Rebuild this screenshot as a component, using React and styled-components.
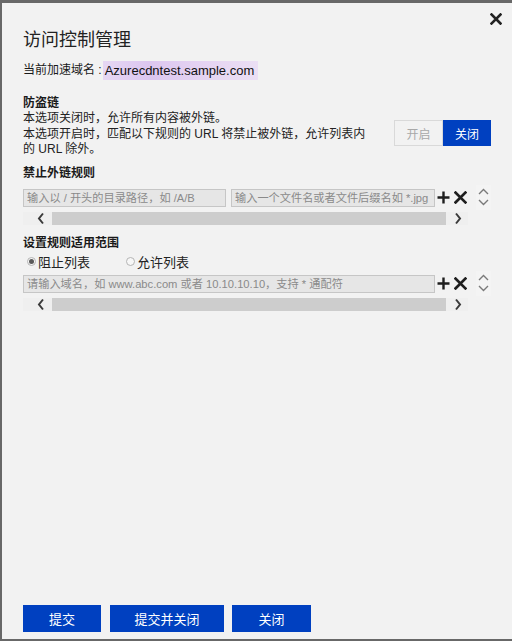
import React from 'react';
import styled, { createGlobalStyle } from 'styled-components';

const Global = createGlobalStyle`
  html, body { margin: 0; padding: 0; background: #686868; }
  body { font-family: "Liberation Sans", "Noto Sans CJK SC", sans-serif; color: #1a1a1a; }
  * { box-sizing: border-box; }
`;

const Overlay = styled.div`
  width: 512px;
  height: 641px;
  padding: 3px 0 2px 2px;
`;

const Dialog = styled.div`
  height: 100%;
  background: #f2f2f2;
  display: flex;
  flex-direction: column;
  padding: 0 21px 7px 21px;
`;

const TopRow = styled.div`
  display: flex;
  justify-content: flex-end;
  padding-top: 10px;
  margin-right: -11px;
  height: 22px;
`;

const CloseBtn = styled.button`
  border: none;
  background: none;
  padding: 0;
  width: 12px;
  height: 12px;
  display: flex;
  cursor: pointer;
`;

const Title = styled.h1`
  margin: 3px 0 0;
  font-size: 18px;
  font-weight: normal;
  line-height: 24px;
  color: #222;
`;

const DomainLine = styled.div`
  margin-top: 8px;
  font-size: 12px;
  line-height: 20px;
  display: flex;
  align-items: center;
`;

const Highlight = styled.span`
  display: inline-block;
  height: 19px;
  line-height: 19px;
  padding: 0 4px 0 2px;
  margin-left: 1px;
  font-size: 13px;
  color: #111;
  background: linear-gradient(90deg, #e6d7f3 0%, #dcc6ef 30%, #e4d2f2 60%, #ebdff4 100%);
`;

const Heading = styled.div`
  font-size: 12px;
  font-weight: bold;
  line-height: 16px;
  margin-top: ${p => p.$mt || 0}px;
`;

const HotlinkRow = styled.div`
  display: flex;
  margin-top: 15px;
`;

const TextBlock = styled.div`
  flex: 1;
`;

const Desc = styled.p`
  margin: 0;
  font-size: 12px;
  line-height: 15.5px;
  color: #222;
`;

const Toggle = styled.div`
  display: flex;
  margin-top: 25px;
  height: 26px;
  align-self: flex-start;
`;

const ToggleBtn = styled.button`
  width: ${p => (p.$active ? 48 : 49)}px;
  height: 26px;
  font-family: inherit;
  font-size: 12px;
  padding: 0;
  border: 1px solid ${p => (p.$active ? '#0040c0' : '#d9d9d9')};
  background: ${p => (p.$active ? '#0040c0' : '#f2f2f2')};
  color: ${p => (p.$active ? '#ffffff' : '#a8a8a8')};
`;

const RuleBlock = styled.div`
  display: flex;
  margin-top: ${p => p.$mt || 0}px;
`;

const RuleMain = styled.div`
  width: 446px;
  display: flex;
  flex-direction: column;
  gap: 5px;
`;

const InputRow = styled.div`
  display: flex;
  align-items: center;
  height: 18px;
  gap: 5px;
`;

const TextInput = styled.input`
  width: ${p => p.$w}px;
  height: 18px;
  border: 1px solid #c6c6c6;
  background: #e6e6e6;
  font-family: inherit;
  font-size: 11.2px;
  padding: 0 2px 0 3px;
  color: #333;
  outline: none;
  &::placeholder { color: #8a8a8a; }
`;

const IconGroup = styled.div`
  display: flex;
  align-items: center;
  gap: 4px;
  margin-left: -3px;
`;

const IconBtn = styled.button`
  border: none;
  background: none;
  padding: 0;
  display: flex;
  width: 13px;
  height: 13px;
`;

const Scrollbar = styled.div`
  height: 13px;
  display: flex;
  align-items: center;
  background: #efefef;
  padding: 0 6px 0 14px;
`;

const ScrollArrow = styled.span`
  display: flex;
  width: 8px;
  height: 13px;
  align-items: center;
  justify-content: center;
`;

const Thumb = styled.div`
  flex: 1;
  height: 13px;
  background: #cdcdcd;
  margin: 0 8px 0 7px;
`;

const Sorter = styled.div`
  width: 15px;
  height: 25px;
  margin: -4px 0 0 8px;
  background: #f4f4f4;
  display: flex;
  flex-direction: column;
  align-items: center;
  justify-content: center;
  gap: 4px;
`;

const RadioRow = styled.div`
  display: flex;
  align-items: center;
  margin-top: 2px;
  height: 18px;
  padding-left: 4px;
`;

const RadioLabel = styled.label`
  display: flex;
  align-items: center;
  gap: 2px;
  font-size: 13px;
  color: #222;
  margin-right: ${p => p.$mr || 0}px;
`;

const RadioDot = styled.span`
  width: 9px;
  height: 9px;
  border-radius: 50%;
  border: 1px solid #b4b4b4;
  background: #f7f7f7;
  display: flex;
  align-items: center;
  justify-content: center;
  &::after {
    content: '';
    width: 5px;
    height: 5px;
    border-radius: 50%;
    background: ${p => (p.$checked ? '#5a5a5a' : 'transparent')};
  }
`;

const Footer = styled.div`
  margin-top: auto;
  display: flex;
  gap: 8px;
`;

const PrimaryBtn = styled.button`
  width: ${p => p.$w}px;
  height: 27px;
  border: none;
  background: #0040c0;
  color: #fff;
  font-family: inherit;
  font-size: 13px;
  padding: 0;
  margin-right: ${p => p.$mr || 0}px;
`;

const XIcon = ({ size = 12, sw = 2.6, color = '#222' }) => (
  <svg width={size} height={size} viewBox="0 0 12 12">
    <path d="M1.5 1.5 L10.5 10.5 M10.5 1.5 L1.5 10.5" stroke={color} strokeWidth={sw} strokeLinecap="square" />
  </svg>
);

const PlusIcon = () => (
  <svg width="13" height="13" viewBox="0 0 13 13">
    <path d="M6.5 0.5 V12.5 M0.5 6.5 H12.5" stroke="#1e1e1e" strokeWidth="2.4" />
  </svg>
);

const Chevron = ({ dir }) => {
  const d = dir === 'left' ? 'M6 1.5 L2 6.5 L6 11.5' : 'M2 1.5 L6 6.5 L2 11.5';
  return (
    <svg width="8" height="13" viewBox="0 0 8 13">
      <path d={d} fill="none" stroke="#3a3a3a" strokeWidth="2" />
    </svg>
  );
};

const SortArrow = ({ dir }) => (
  <svg width="11" height="7" viewBox="0 0 11 7">
    <path d={dir === 'up' ? 'M1 6 L5.5 1.5 L10 6' : 'M1 1 L5.5 5.5 L10 1'} fill="none" stroke="#7a7a7a" strokeWidth="1.4" />
  </svg>
);

const RuleControls = () => (
  <IconGroup>
    <IconBtn aria-label="add"><PlusIcon /></IconBtn>
    <IconBtn aria-label="remove"><XIcon size={13} sw={2.5} color="#1e1e1e" /></IconBtn>
  </IconGroup>
);

const ScrollTrack = () => (
  <Scrollbar>
    <ScrollArrow><Chevron dir="left" /></ScrollArrow>
    <Thumb />
    <ScrollArrow><Chevron dir="right" /></ScrollArrow>
  </Scrollbar>
);

const SortBox = () => (
  <Sorter>
    <SortArrow dir="up" />
    <SortArrow dir="down" />
  </Sorter>
);

export default function App() {
  return (
    <>
      <Global />
      <Overlay>
        <Dialog>
          <TopRow>
            <CloseBtn aria-label="close"><XIcon /></CloseBtn>
          </TopRow>
          <Title>访问控制管理</Title>
          <DomainLine>
            当前加速域名 :<Highlight>Azurecdntest.sample.com</Highlight>
          </DomainLine>

          <HotlinkRow>
            <TextBlock>
              <Heading>防盗链</Heading>
              <Desc>本选项关闭时，允许所有内容被外链。</Desc>
              <Desc>
                本选项开启时，匹配以下规则的 URL 将禁止被外链，允许列表内
                <br />
                的 URL 除外。
              </Desc>
            </TextBlock>
            <Toggle>
              <ToggleBtn>开启</ToggleBtn>
              <ToggleBtn $active>关闭</ToggleBtn>
            </Toggle>
          </HotlinkRow>

          <Heading $mt={7}>禁止外链规则</Heading>
          <RuleBlock $mt={8}>
            <RuleMain>
              <InputRow>
                <TextInput $w={203} placeholder="输入以 / 开头的目录路径，如 /A/B" />
                <TextInput $w={204} placeholder="输入一个文件名或者文件后缀名如 *.jpg" />
                <RuleControls />
              </InputRow>
              <ScrollTrack />
            </RuleMain>
            <SortBox />
          </RuleBlock>

          <Heading $mt={10}>设置规则适用范围</Heading>
          <RadioRow>
            <RadioLabel $mr={36}><RadioDot $checked />阻止列表</RadioLabel>
            <RadioLabel><RadioDot />允许列表</RadioLabel>
          </RadioRow>
          <RuleBlock $mt={4}>
            <RuleMain>
              <InputRow>
                <TextInput $w={412} placeholder="请输入域名，如 www.abc.com 或者 10.10.10.10，支持 * 通配符" />
                <RuleControls />
              </InputRow>
              <ScrollTrack />
            </RuleMain>
            <SortBox />
          </RuleBlock>

          <Footer>
            <PrimaryBtn $w={78} $mr={1}>提交</PrimaryBtn>
            <PrimaryBtn $w={114}>提交并关闭</PrimaryBtn>
            <PrimaryBtn $w={79}>关闭</PrimaryBtn>
          </Footer>
        </Dialog>
      </Overlay>
    </>
  );
}
